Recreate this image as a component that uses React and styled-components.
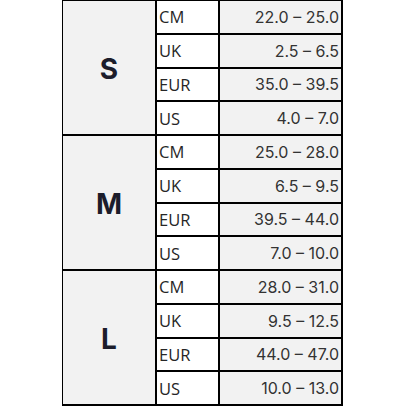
import React from "react";
import styled, { createGlobalStyle } from "styled-components";

const sizes = [
  {
    size: "S",
    rows: [
      ["CM", "22.0 – 25.0"],
      ["UK", "2.5 – 6.5"],
      ["EUR", "35.0 – 39.5"],
      ["US", "4.0 – 7.0"],
    ],
  },
  {
    size: "M",
    rows: [
      ["CM", "25.0 – 28.0"],
      ["UK", "6.5 – 9.5"],
      ["EUR", "39.5 – 44.0"],
      ["US", "7.0 – 10.0"],
    ],
  },
  {
    size: "L",
    rows: [
      ["CM", "28.0 – 31.0"],
      ["UK", "9.5 – 12.5"],
      ["EUR", "44.0 – 47.0"],
      ["US", "10.0 – 13.0"],
    ],
  },
];

const GlobalStyle = createGlobalStyle`
  html, body {
    margin: 0;
    padding: 0;
    background: #ffffff;
  }
`;

const Page = styled.div`
  width: 407px;
  height: 407px;
  display: flex;
  justify-content: flex-start;
  background: #ffffff;
`;

const Table = styled.div`
  margin-left: 62px;
  width: 281px;
  height: 406px;
  box-sizing: border-box;
  padding: 1px 2px 2px 1px;
  background: #000;
  display: flex;
  flex-direction: column;
  gap: 2px;
`;

const Block = styled.div`
  flex: 1;
  display: grid;
  grid-template-columns: 92px 1fr;
  gap: 2px;
`;

const SizeCell = styled.div`
  background: #f2f2f2;
  display: flex;
  align-items: center;
  justify-content: center;
  font-family: "Inter", "Liberation Sans", sans-serif;
  font-weight: 700;
  font-size: 28px;
  color: #1c1d2b;
  padding-top: 2px;
`;

const Rows = styled.div`
  display: flex;
  flex-direction: column;
  gap: 2px;
`;

const Row = styled.div`
  flex: 1;
  display: grid;
  grid-template-columns: 61px 1fr;
  gap: 2px;
`;

const Unit = styled.div`
  background: #ffffff;
  display: flex;
  align-items: center;
  padding-left: 2px;
  font-family: "Open Sans", "Liberation Sans", sans-serif;
  font-weight: 500;
  font-size: 16.5px;
  color: #262626;
`;

const Value = styled.div`
  background: #f2f2f2;
  display: flex;
  align-items: center;
  justify-content: flex-end;
  padding-right: 2px;
  font-family: "Inter", "Liberation Sans", sans-serif;
  font-size: 16px;
  color: #333333;
`;

export default function App() {
  return (
    <>
      <GlobalStyle />
      <Page>
        <Table>
          {sizes.map((s) => (
            <Block key={s.size}>
              <SizeCell>{s.size}</SizeCell>
              <Rows>
                {s.rows.map(([unit, value]) => (
                  <Row key={unit}>
                    <Unit>{unit}</Unit>
                    <Value>{value}</Value>
                  </Row>
                ))}
              </Rows>
            </Block>
          ))}
        </Table>
      </Page>
    </>
  );
}
